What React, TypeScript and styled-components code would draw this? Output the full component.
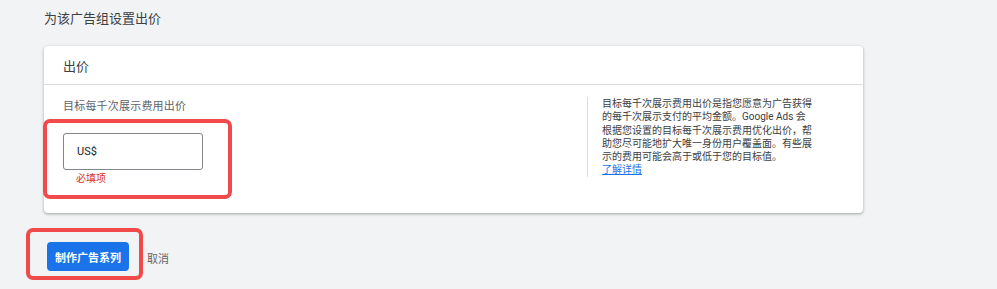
import React from "react";
import styled, { createGlobalStyle } from "styled-components";

const Global = createGlobalStyle`
  html, body { margin: 0; padding: 0; background: #f1f3f4; }
  body { font-family: Roboto, "Noto Sans CJK SC", "Liberation Sans", sans-serif; color: #3c4043; }
  * { box-sizing: border-box; }
`;

const Page = styled.div`
  padding: 9px 0 0 44px;
  width: 997px;
  height: 289px;
  overflow: hidden;
`;

const Title = styled.div`
  font-size: 13px;
  line-height: 20px;
  color: #3c4043;
`;

const Card = styled.div`
  margin-top: 17px;
  width: 819px;
  background: #fff;
  border-radius: 4px;
  box-shadow: 0 1px 2px rgba(60, 64, 67, 0.3), 0 1px 3px 1px rgba(60, 64, 67, 0.12);
`;

const CardHeader = styled.div`
  height: 39px;
  display: flex;
  align-items: center;
  padding-left: 19px;
  font-size: 13px;
  color: #3c4043;
  border-bottom: 1px solid #dadce0;
`;

const CardBody = styled.div`
  display: grid;
  grid-template-columns: 524px 1fr;
  padding: 12px 0 27px 19px;
`;

const LeftCol = styled.div`
  padding-top: 2px;
`;

const Label = styled.div`
  font-size: 11px;
  line-height: 16px;
  color: #5f6368;
  letter-spacing: 0.2px;
`;

const Annotated = styled.div<{ $t: number; $l: number; $r: number; $b: number }>`
  position: relative;
  &::after {
    content: "";
    position: absolute;
    top: ${(p) => -p.$t}px;
    left: ${(p) => -p.$l}px;
    right: ${(p) => -p.$r}px;
    bottom: ${(p) => -p.$b}px;
    border: 4px solid #f04a4a;
    border-radius: 7px;
    pointer-events: none;
  }
`;

const InputGroup = styled(Annotated)`
  margin-top: 18px;
  width: 140px;
`;

const InputBox = styled.div`
  height: 37px;
  border: 1px solid #80868b;
  border-radius: 3px;
  display: flex;
  align-items: center;
  padding-left: 13px;
  font-size: 11px;
  color: #202124;
`;

const ErrorText = styled.div`
  margin-top: 2px;
  padding-left: 13px;
  font-size: 10px;
  line-height: 14px;
  color: #d93025;
`;

const HelpCol = styled.div`
  border-left: 1px solid #dadce0;
  padding-left: 14px;
  font-size: 10px;
  line-height: 13.3px;
  color: #3c4043;
  align-self: start;
`;

const Link = styled.a`
  color: #1a73e8;
  text-decoration: underline;
`;

const Footer = styled.div`
  margin-top: 29px;
  display: flex;
  align-items: center;
  gap: 18px;
`;

const ButtonWrap = styled(Annotated)`
  margin-left: 3px;
`;

const PrimaryButton = styled.button`
  height: 29px;
  padding: 0 8px;
  border: none;
  border-radius: 4px;
  background: #1a73e8;
  color: #fff;
  font-family: inherit;
  font-size: 11px;
  font-weight: 700;
  display: flex;
  align-items: center;
`;

const CancelText = styled.span`
  font-size: 11px;
  color: #5f6368;
  padding-top: 3px;
`;

export default function App() {
  return (
    <Page>
      <Global />
      <Title>为该广告组设置出价</Title>
      <Card>
        <CardHeader>出价</CardHeader>
        <CardBody>
          <LeftCol>
            <Label>目标每千次展示费用出价</Label>
            <InputGroup $t={14} $l={20} $r={29} $b={13}>
              <InputBox>US$</InputBox>
              <ErrorText>必填项</ErrorText>
            </InputGroup>
          </LeftCol>
          <HelpCol>
            目标每千次展示费用出价是指您愿意为广告获得
            <br />
            的每千次展示支付的平均金额。Google Ads 会
            <br />
            根据您设置的目标每千次展示费用优化出价，帮
            <br />
            助您尽可能地扩大唯一身份用户覆盖面。有些展
            <br />
            示的费用可能会高于或低于您的目标值。
            <br />
            <Link href="#">了解详情</Link>
          </HelpCol>
        </CardBody>
      </Card>
      <Footer>
        <ButtonWrap $t={14} $l={21} $r={14} $b={9}>
          <PrimaryButton>制作广告系列</PrimaryButton>
        </ButtonWrap>
        <CancelText>取消</CancelText>
      </Footer>
    </Page>
  );
}
